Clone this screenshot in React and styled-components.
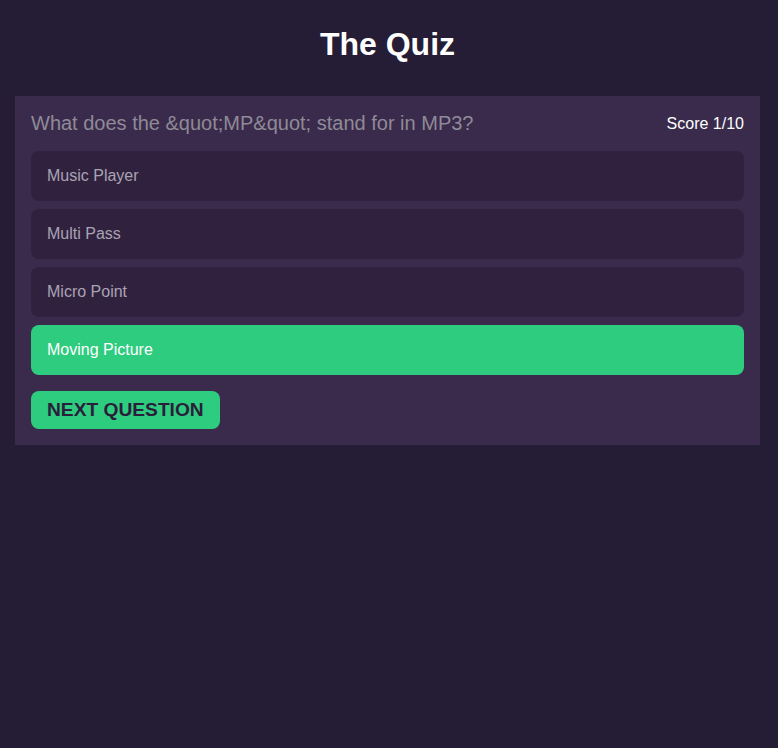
import styled, { createGlobalStyle } from "styled-components"

const GlobalStyle = createGlobalStyle`
    body {
        margin: 0;
        background: #251d35;
        font-family: "Liberation Sans", Arial, sans-serif;
    }
`

const answers = [
    { text: "Music Player", correct: false },
    { text: "Multi Pass", correct: false },
    { text: "Micro Point", correct: false },
    { text: "Moving Picture", correct: true },
]

const App = () => {
    return (
        <>
            <GlobalStyle />
            <Page>
                <Title>The Quiz</Title>
                <Card>
                    <QuestionRow>
                        <Question>What does the &amp;quot;MP&amp;quot; stand for in MP3?</Question>
                        <Score>Score 1/10</Score>
                    </QuestionRow>
                    <AnswerList>
                        {answers.map((a, index) => (
                            <Answer key={index} $correct={a.correct}>{a.text}</Answer>
                        ))}
                    </AnswerList>
                    <NextButton>Next Question</NextButton>
                </Card>
            </Page>
        </>
    )
}

const Page = styled.div`
    min-height: 748px;
    padding: 0 18px 0 15px;
    box-sizing: border-box;
`

const Title = styled.h1`
    margin: 0;
    padding: 26px 0 33px;
    text-align: center;
    color: #ffffff;
    font-size: 32px;
    line-height: 37px;
    font-weight: bold;
`

const Card = styled.div`
    background: #3a2b4c;
    padding: 16px;
    display: flex;
    flex-direction: column;
    gap: 16px;
`

const QuestionRow = styled.div`
    display: flex;
    justify-content: space-between;
    align-items: center;
`

const Question = styled.div`
    color: #8f8a97;
    font-size: 20px;
    line-height: 23px;
`

const Score = styled.div`
    color: #ffffff;
    font-size: 16px;
`

const AnswerList = styled.div`
    display: flex;
    flex-direction: column;
    gap: 8px;
`

const Answer = styled.div`
    height: 50px;
    display: flex;
    align-items: center;
    padding: 0 16px;
    border-radius: 8px;
    font-size: 16px;
    background: ${p => p.$correct ? "#2ecc7f" : "#30223f"};
    color: ${p => p.$correct ? "#ffffff" : "#aaa3b4"};
`

const NextButton = styled.button`
    align-self: flex-start;
    height: 38px;
    padding: 0 16px;
    border: none;
    border-radius: 8px;
    background: #2ecc7f;
    color: #2a1f3b;
    font-family: "Liberation Sans", Arial, sans-serif;
    font-size: 19.2px;
    font-weight: bold;
    text-transform: uppercase;
`

export default App
